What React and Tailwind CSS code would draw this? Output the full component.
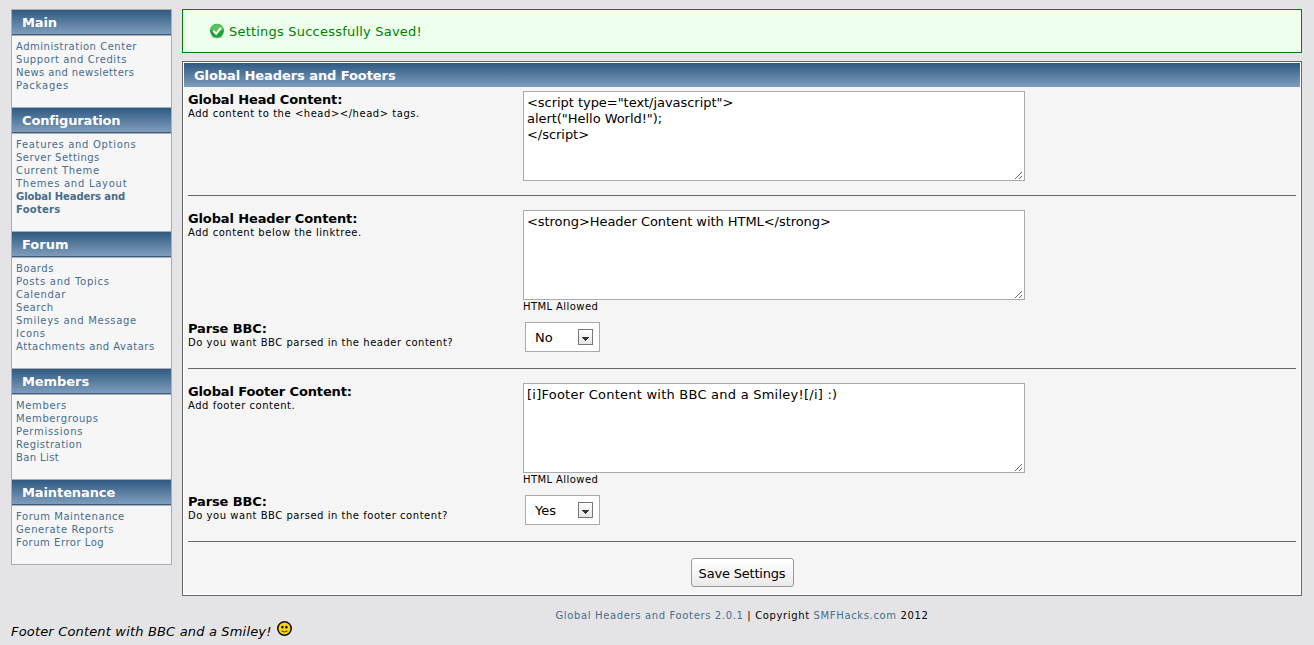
const SECTIONS = [
  { title: 'Main', track: 'tracking-[-0.1px]', links: [['Administration Center', 'tracking-[0.52px]'], ['Support and Credits', 'tracking-[0.58px]'], ['News and newsletters', 'tracking-[0.4px]'], ['Packages', 'tracking-[0.8px]']] },
  { title: 'Configuration', track: 'tracking-[-0.16px]', links: [['Features and Options', 'tracking-[0.68px]'], ['Server Settings', 'tracking-[0.45px]'], ['Current Theme', 'tracking-[0.65px]'], ['Themes and Layout', 'tracking-[0.73px]'], ['Global Headers and', 'font-bold tracking-[-0.08px]'], ['Footers', 'font-bold tracking-[0.25px]']] },
  { title: 'Forum', track: 'tracking-[0px]', links: [['Boards', 'tracking-[0.58px]'], ['Posts and Topics', 'tracking-[0.76px]'], ['Calendar', 'tracking-[0.63px]'], ['Search', 'tracking-[0.55px]'], ['Smileys and Message', 'tracking-[0.68px]'], ['Icons', 'tracking-[0.72px]'], ['Attachments and Avatars', 'tracking-[0.52px]']] },
  { title: 'Members', track: 'tracking-[-0.07px]', links: [['Members', 'tracking-[0.66px]'], ['Membergroups', 'tracking-[0.62px]'], ['Permissions', 'tracking-[0.73px]'], ['Registration', 'tracking-[0.5px]'], ['Ban List', 'tracking-[0.4px]']] },
  { title: 'Maintenance', track: 'tracking-[-0.1px]', links: [['Forum Maintenance', 'tracking-[0.56px]'], ['Generate Reports', 'tracking-[0.62px]'], ['Forum Error Log', 'tracking-[0.53px]']] },
];

function Sidebar() {
  return (
    <nav className="h-[556px] w-[161px] shrink-0 border border-t-0 border-[#adadad] bg-[#f6f6f6]">
      {SECTIONS.map((s) => (
        <section key={s.title}>
          <h3 className="h-[27px] border-t border-b border-[#adadad] bg-[linear-gradient(#2f5a82_0px,#7f9dbc_24px,#3b5c82_24px)] pl-[10px] text-[13px] leading-[25px] font-bold text-white"><span className={s.track}>{s.title}</span></h3>
          <ul className="pt-[4px] pb-[15px] pl-[4px]">
            {s.links.map(([t, c]) => (
              <li key={t} className="h-[13px] text-[10px] leading-[13px] whitespace-nowrap text-[#476c8e]"><a className={c}>{t}</a></li>
            ))}
          </ul>
        </section>
      ))}
    </nav>
  );
}

function Grip() {
  return (
    <svg className="absolute right-[1px] bottom-[1px]" width="8" height="8" shapeRendering="crispEdges" fill="#666">
      {[0, 1, 2, 3, 4, 5, 6].map((i) => <rect key={i} x={i} y={7 - i} width="1" height="1" />)}
      {[0, 1, 2].map((i) => <rect key={'b' + i} x={4 + i} y={7 - i} width="1" height="1" />)}
    </svg>
  );
}

function TextBox({ children, track }) {
  return (
    <div className="relative h-[90px] w-[502px] border border-[#aaa] bg-white px-[3px] pt-[3px] text-[13px] leading-[16px] whitespace-pre">
      <span className={track}>{children}</span>
      <Grip />
    </div>
  );
}

function Label({ title, note }) {
  return (
    <div className="w-[335px] shrink-0 pt-px">
      <div className="h-[16px] text-[13px] leading-[16px] font-bold tracking-[-0.13px]">{title}</div>
      <div className="h-[12px] text-[10px] leading-[12px] tracking-[0.53px]">{note}</div>
    </div>
  );
}

function Choice({ value }) {
  return (
    <div className="ml-[2px] flex h-[30px] w-[75px] items-center justify-between border border-[#aaa] bg-white pr-[6px] pl-[9px] text-[13px]">
      <span className="pt-[2px]">{value}</span>
      <span className="flex h-[16px] w-[15px] items-center justify-center border border-[#777] bg-linear-to-b from-white to-[#e4e4e4]">
        <svg className="mt-[3px]" width="7" height="4" shapeRendering="crispEdges" fill="#333"><path d="M0 0h7v1h-1v1h-1v1h-1v1h-1v-1h-1v-1h-1v-1h-1z" /></svg>
      </span>
    </div>
  );
}

function BbcBlock({ title, note, content, track, parseNote, value }) {
  return (
    <div className="h-[173px] border-b border-[#666] pt-[14px]">
      <div className="flex h-[112px]">
        <Label title={title} note={note} />
        <div>
          <TextBox track={track}>{content}</TextBox>
          <div className="text-[10px] leading-[14px] tracking-[0.42px]">HTML Allowed</div>
        </div>
      </div>
      <div className="flex">
        <div className="-mt-[2px]"><Label title="Parse BBC:" note={parseNote} /></div>
        <Choice value={value} />
      </div>
    </div>
  );
}

export default function App() {
  return (
    <div className="h-[645px] w-[1314px] overflow-hidden bg-[#e4e4e6] pt-[9px] pl-[11px] font-['DejaVu_Sans',sans-serif] text-black">
      <div className="flex h-[609px] gap-[10px]">
        <Sidebar />
        <main className="w-[1120px]">
          <div className="flex h-[44px] items-center border border-[#008000] bg-[#eeffee] pl-[26px] text-[13px] text-[#008000]">
            <svg width="16" height="16" viewBox="0 0 16 16" className="mr-[4px]">
              <ellipse cx="8" cy="14" rx="6" ry="1.5" fill="#b9c9b9" />
              <circle cx="8" cy="7.8" r="7" fill="#18a52b" />
              <path d="M1.8 7A6.2 6 0 0 1 14.2 7Q8 9 1.8 7Z" fill="#58c261" />
              <path d="M4.2 7.8L7.2 10.6L12 4.8" fill="none" stroke="#fff" strokeWidth="2.2" />
            </svg>
            <span className="pt-[2px] tracking-[0.21px]">Settings Successfully Saved!</span>
          </div>
          <div className="mt-[8px] h-[535px] border border-[#666] bg-[#f5f5f5] p-px shadow-[inset_0_0_0_1px_#fff]">
            <h2 className="h-[24px] bg-linear-to-b from-[#2f5a82] to-[#7f9dbc] pl-[10px] text-[13px] leading-[26px] font-bold tracking-[-0.08px] text-white">Global Headers and Footers</h2>
            <div className="px-[4px]">
              <div className="flex h-[109px] border-b border-[#666] pt-[4px]">
                <Label title="Global Head Content:" note="Add content to the <head></head> tags." />
                <TextBox track="tracking-[-0.04px]">{'<script type="text/javascript">\nalert("Hello World!");\n</script>'}</TextBox>
              </div>
              <BbcBlock title="Global Header Content:" note="Add content below the linktree." content="<strong>Header Content with HTML</strong>" track="tracking-[-0.05px]" parseNote="Do you want BBC parsed in the header content?" value="No" />
              <BbcBlock title="Global Footer Content:" note="Add footer content." content="[i]Footer Content with BBC and a Smiley![/i] :)" track="tracking-[0.24px]" parseNote="Do you want BBC parsed in the footer content?" value="Yes" />
              <div className="flex justify-center pt-[16px]">
                <button className="h-[29px] w-[103px] rounded-[3px] border border-[#999] bg-[linear-gradient(#fff,#f6f6f6_50%,#e9e9e9)] pt-[2px] text-[13px] tracking-[-0.2px] whitespace-nowrap">Save Settings</button>
              </div>
            </div>
          </div>
          <p className="mt-[13px] text-center text-[10px] leading-[14px] tracking-[0.64px]">
            <a className="text-[#476c8e]">Global Headers and Footers 2.0.1</a> | Copyright <a className="text-[#476c8e]">SMFHacks.com</a> 2012
          </p>
        </main>
      </div>
      <div className="flex h-[27px] items-center text-[13px] italic">
        <span className="mt-[1px] tracking-[0.17px]">Footer Content with BBC and a Smiley!</span>
        <svg className="mb-[6px] ml-[5px]" width="15" height="15" viewBox="0 0 15 15">
          <circle cx="7.5" cy="7.5" r="6.7" fill="#ffd800" stroke="#111" strokeWidth="1.6" />
          <ellipse cx="5.4" cy="6.2" rx="1.1" ry="1.4" /><ellipse cx="9.4" cy="6.2" rx="1.1" ry="1.4" />
          <path d="M4.5 10Q7.5 12 10.5 10" fill="none" stroke="#333" />
        </svg>
      </div>
    </div>
  );
}
